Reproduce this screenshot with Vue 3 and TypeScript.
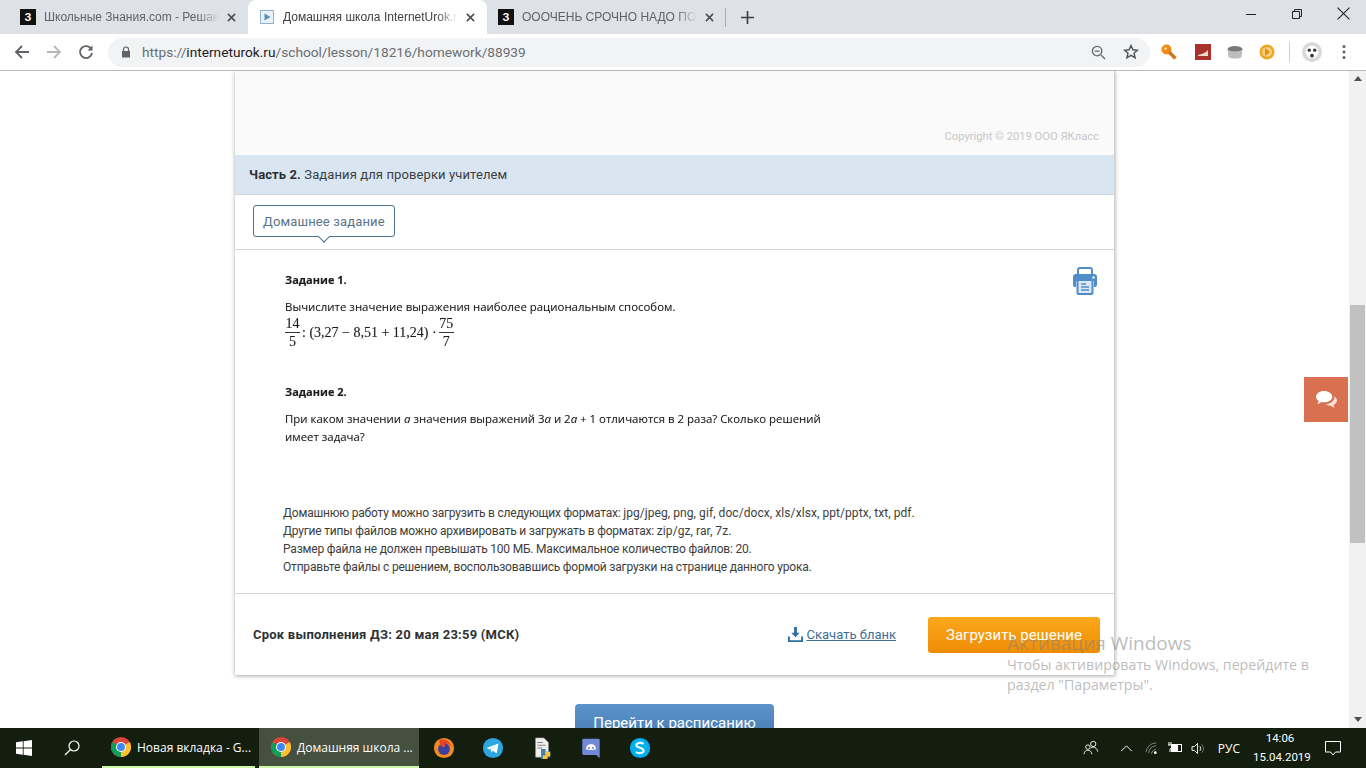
<script setup lang="ts">
interface Tab { title: string; active: boolean; icon: 'z' | 'i' }
interface Note { text: string; latin?: string }
const tabs: Tab[] = [
  { title: 'Школьные Знания.com - Решаем', active: false, icon: 'z' },
  { title: 'Домашняя школа InternetUrok.ru', active: true, icon: 'i' },
  { title: 'ОООЧЕНЬ СРОЧНО НАДО ПОМОЧЬ', active: false, icon: 'z' },
]
const notes: Note[] = [
  { text: 'Домашнюю работу можно загрузить в следующих форматах: ', latin: 'jpg/jpeg, png, gif, doc/docx, xls/xlsx, ppt/pptx, txt, pdf.' },
  { text: 'Другие типы файлов можно архивировать и загружать в форматах: ', latin: 'zip/gz, rar, 7z.' },
  { text: 'Размер файла не должен превышать 100 МБ. Максимальное количество файлов: 20.' },
  { text: 'Отправьте файлы с решением, воспользовавшись формой загрузки на странице данного урока.' },
]
</script>

<template>
  <div class="screen">
    <header class="tabstrip">
      <div v-for="t in tabs" :key="t.title" class="tab" :class="{ active: t.active }">
        <span v-if="t.icon === 'z'" class="fav-z">З</span>
        <svg v-else class="fav-i" viewBox="0 0 16 16"><rect x="1.5" y="1.5" width="13" height="13" fill="#e8f2f8" stroke="#8fb4cc"/><path d="M5.5 4.5v7l6-3.500z" fill="#5b8fb5"/></svg>
        <span class="tab-title">{{ t.title }}</span>
        <svg class="tab-x" viewBox="0 0 10 10"><path d="M1 1l8 8M9 1l-8 8" stroke="#4a4d50" stroke-width="1.700"/></svg>
      </div>
      <span class="tab-sep"></span>
      <svg class="newtab" viewBox="0 0 14 14"><path d="M7 0v14M0 7h14" stroke="#3c4043" stroke-width="1.800"/></svg>
      <div class="winctl">
        <svg viewBox="0 0 12 12"><path d="M1 6.500h10" stroke="#222" stroke-width="1"/></svg>
        <svg viewBox="0 0 12 12"><path d="M1.500 3.500h7v7h-7zM3.500 3.500v-2h7v7h-2" fill="none" stroke="#222" stroke-width="1"/></svg>
        <svg viewBox="0 0 12 12"><path d="M.5.5l11 11M11.500.5l-11 11" stroke="#222" stroke-width="1"/></svg>
      </div>
    </header>

    <nav class="toolbar">
      <svg class="nav" viewBox="0 0 16 16"><path d="M15 8H2M8 2L2 8l6 6" fill="none" stroke="#5f6368" stroke-width="1.800"/></svg>
      <svg class="nav" viewBox="0 0 16 16"><path d="M1 8h13M8 2l6 6-6 6" fill="none" stroke="#b5b7ba" stroke-width="1.800"/></svg>
      <svg class="nav" viewBox="0 0 16 16"><path d="M13.500 5.500A6 6 0 1 0 14 9" fill="none" stroke="#5f6368" stroke-width="1.800"/><path d="M14.500 1.500v5h-5z" fill="#5f6368"/></svg>
      <div class="omnibox">
        <svg class="lock" viewBox="0 0 10 12"><path d="M2.500 5V3.500a2.500 2.500 0 0 1 5 0V5" fill="none" stroke="#5f6368" stroke-width="1.200"/><rect x="1" y="5" width="8" height="6.500" fill="#5f6368"/></svg>
        <span class="url"><span class="dim">https://</span>interneturok.ru<span class="dim">/school/lesson/18216/homework/88939</span></span>
        <svg class="omni-zoom" viewBox="0 0 16 16"><circle cx="6.500" cy="6.500" r="5" fill="none" stroke="#5f6368" stroke-width="1.400"/><path d="M10.500 10.500l4.500 4.500M4 6.500h5" stroke="#5f6368" stroke-width="1.400"/></svg>
        <svg class="omni-star" viewBox="0 0 16 16"><path d="M8 1.500l1.900 4.300 4.600.4-3.500 3 1.100 4.600L8 11.400l-4.100 2.400L5 9.200l-3.500-3 4.600-.4z" fill="none" stroke="#4d5054" stroke-width="1.400"/></svg>
      </div>
      <div class="ext">
        <svg class="key" viewBox="0 0 16 16"><circle cx="5.500" cy="5.500" r="5" fill="#ef8a17"/><circle cx="4.500" cy="4.500" r="1.300" fill="#fbd9a8"/><path d="M8 8l6.500 6.500" stroke="#d8731a" stroke-width="3.400"/></svg>
        <svg viewBox="0 0 16 16"><rect width="16" height="16" fill="#a9322c"/><path d="M3 12h10V6l-2 2-2 1-2 1-4 1z" fill="#f3d9d4"/></svg>
        <svg viewBox="0 0 16 16"><ellipse cx="8" cy="5" rx="7.500" ry="3" fill="#777"/><path d="M.5 5.500l1 7.500c2 2 11 2 13 0l1-7.500c-2 2.500-13 2.500-15 0z" fill="#bdbdbd"/></svg>
        <svg viewBox="0 0 16 16"><circle cx="8" cy="8" r="7.500" fill="#f2a41f"/><circle cx="8" cy="8" r="5" fill="#f7d083"/><path d="M6 4l5 4-5 4z" fill="#e98d12"/></svg>
        <span class="ext-sep"></span>
        <svg class="avatar" viewBox="0 0 22 22"><circle cx="11" cy="11" r="11" fill="#d9dad9"/><circle cx="11" cy="11" r="7" fill="#fff"/><circle cx="8" cy="9" r="1.800" fill="#333"/><circle cx="14" cy="9" r="1.800" fill="#333"/><circle cx="11" cy="15" r="2" fill="#333"/></svg>
        <svg class="menu" viewBox="0 0 4 16"><circle cx="2" cy="2.500" r="1.500" fill="#5f6368"/><circle cx="2" cy="8" r="1.500" fill="#5f6368"/><circle cx="2" cy="13.500" r="1.500" fill="#5f6368"/></svg>
      </div>
    </nav>

    <div class="viewport">
      <main class="page">
        <section class="card">
          <div class="card-top"><span class="copyright">Copyright © 2019 ООО ЯКласс</span></div>
          <div class="part"><b>Часть 2.</b> Задания для проверки учителем</div>
          <div class="tabs-row"><span class="hw-tab">Домашнее задание</span></div>
          <div class="body">
            <svg class="printer" viewBox="0 0 24 28">
              <path d="M5 8V3a2 2 0 0 1 2-2h10a2 2 0 0 1 2 2v5" fill="none" stroke="#4f8cc9" stroke-width="2"/>
              <path d="M3 7h18a3 3 0 0 1 3 3v8a2 2 0 0 1-2 2h-1v-6H3v6H2a2 2 0 0 1-2-2v-8a3 3 0 0 1 3-3z" fill="#4f8cc9"/>
              <rect x="4.500" y="13" width="15" height="14" rx="1" fill="#dbe9f6" stroke="#4f8cc9" stroke-width="2"/>
              <path d="M8 17h5M8 20h8M8 23h8" stroke="#4f8cc9" stroke-width="1.500"/>
              <circle cx="20.500" cy="10.500" r="1.200" fill="#fff"/>
            </svg>
            <div class="task task-one">
              <p class="task-h">Задание 1.</p>
              <p class="task-p">Вычислите значение выражения наиболее рациональным способом.</p>
              <div class="math">
                <span class="frac"><span class="num">14</span><span class="den">5</span></span>
                <span class="expr">: (3,27 − 8,51 + 11,24) ·</span>
                <span class="frac"><span class="num">75</span><span class="den">7</span></span>
              </div>
            </div>
            <div class="task task-two">
              <p class="task-h">Задание 2.</p>
              <p class="task-p">При каком значении <i>a</i> значения выражений 3<i>a</i> и 2<i>a</i> + 1 отличаются в 2 раза? Сколько решений<br>имеет задача?</p>
            </div>
            <div class="notes">
              <p v-for="n in notes" :key="n.text">{{ n.text }}<span v-if="n.latin" class="latin">{{ n.latin }}</span></p>
            </div>
          </div>
          <footer class="card-foot">
            <b class="deadline">Срок выполнения ДЗ: 20 мая 23:59 (МСК)</b>
            <svg class="dl-icon" viewBox="0 0 16 16"><path d="M6.500 0h3v6h3L8 11 3.500 6h3z" fill="#2f6f9f"/><path d="M1 10v5h14v-5" fill="none" stroke="#2f6f9f" stroke-width="2"/></svg>
            <a class="dl-link">Скачать бланк</a>
            <span class="upload">Загрузить решение</span>
          </footer>
        </section>
        <div class="schedule-wrap"><span class="schedule">Перейти к расписанию</span></div>
      </main>
      <aside class="scrollbar">
        <span class="arrow-up"></span>
        <span class="thumb"></span>
        <span class="arrow-down"></span>
      </aside>
      <div class="chat">
        <svg viewBox="0 0 24 20"><path d="M9.500 1C4.800 1 1 3.700 1 7c0 1.800 1.100 3.400 2.900 4.500L2.500 15l4.200-2.300c.9.200 1.800.3 2.800.3 4.700 0 8.500-2.700 8.500-6S14.200 1 9.500 1z" fill="#fff"/><path d="M20 6.500c.2.500.3 1 .3 1.500 0 3.800-4 6.700-9 7 1.300 1 3.200 1.600 5.200 1.500l4 2.500-1-3.500c2.200-1 3.500-2.600 3.500-4.500 0-1.700-1.100-3.300-3-4.500z" fill="#fbe3d9"/></svg>
      </div>
      <div class="watermark">
        <div class="wm-h">Активация Windows</div>
        <div class="wm-p">Чтобы активировать Windows, перейдите в<br>раздел "Параметры".</div>
      </div>
    </div>

    <footer class="taskbar">
      <svg class="start" viewBox="0 0 16 16"><path d="M0 2.300l6.800-1v6.300H0zM7.600 1.200L16 0v7.600H7.600zM0 8.400h6.800v6.300l-6.800-1zM7.600 8.400H16V16l-8.400-1.200z" fill="#fff"/></svg>
      <svg class="search" viewBox="0 0 16 16"><circle cx="10" cy="6" r="5" fill="none" stroke="#fff" stroke-width="1.200"/><path d="M6.500 9.500L1 15" stroke="#fff" stroke-width="1.300"/></svg>
      <div class="tb-item">
        <svg class="chrome" viewBox="0 0 24 24"><circle cx="12" cy="12" r="11" fill="#db4437"/><path d="M12 12L2.500 6.500A11 11 0 0 0 12 23z" fill="#0f9d58"/><path d="M12 12l9.500-5.500A11 11 0 0 1 12 23z" fill="#fbc02d"/><circle cx="12" cy="12" r="5.500" fill="#fff"/><circle cx="12" cy="12" r="4.300" fill="#4285f4"/></svg>
        <span>Новая вкладка - G...</span>
      </div>
      <div class="tb-item tb-active">
        <svg class="chrome" viewBox="0 0 24 24"><circle cx="12" cy="12" r="11" fill="#db4437"/><path d="M12 12L2.500 6.500A11 11 0 0 0 12 23z" fill="#0f9d58"/><path d="M12 12l9.500-5.500A11 11 0 0 1 12 23z" fill="#fbc02d"/><circle cx="12" cy="12" r="5.500" fill="#fff"/><circle cx="12" cy="12" r="4.300" fill="#4285f4"/></svg>
        <span>Домашняя школа ...</span>
      </div>
      <div class="tb-apps">
        <svg viewBox="0 0 24 24"><circle cx="12" cy="12" r="11" fill="#f58a1f"/><circle cx="12" cy="13" r="6.500" fill="#3b3f9e"/><path d="M7 3c5-2 12 1 13 8-2-3-5-5-8-4 2 1 2 3 0 4-3 0-5-2-5-8z" fill="#e8432a"/></svg>
        <svg viewBox="0 0 24 24"><circle cx="12" cy="12" r="11" fill="#2ca5e0"/><path d="M5 12l13-5-2 11-4-3-2 2-.5-3.500L16 9l-7.500 4.500z" fill="#fff"/></svg>
        <svg viewBox="0 0 24 24"><path d="M5 1h9l5 5v16H5z" fill="#f0f0f0" stroke="#999" stroke-width=".7"/><path d="M7 6h6M7 9h9M7 12h5" stroke="#777"/><path d="M11 13h5v3h5v6h-5v2h-5z" fill="#3e7fb1"/><path d="M15 16h6v5h-3v3h-5v-4h3z" fill="#f4c63d"/></svg>
        <svg viewBox="0 0 24 24"><path d="M4 2h16a1.500 1.500 0 0 1 1.500 1.500V23l-4-3.500H4A1.500 1.500 0 0 1 2.500 18V3.500A1.500 1.500 0 0 1 4 2z" fill="#7289da"/><path d="M6.500 13c1-4 2-5 5.500-5s4.500 1 5.500 5c-2 1.500-9 1.500-11 0z" fill="#fff"/><circle cx="9.800" cy="12" r="1.200" fill="#7289da"/><circle cx="14.200" cy="12" r="1.200" fill="#7289da"/></svg>
        <svg viewBox="0 0 24 24"><circle cx="12" cy="12" r="11" fill="#00aff0"/><path d="M16 7.500C13 5.500 8 6.500 8 9c0 3.500 8 2 8 6 0 2.500-5 3.500-8.500 1.500" fill="none" stroke="#fff" stroke-width="2.200"/></svg>
      </div>
      <div class="tray">
        <svg class="t-people" viewBox="0 0 18 18"><circle cx="11.500" cy="4.500" r="3" fill="none" stroke="#fff"/><circle cx="5.500" cy="8" r="2.500" fill="none" stroke="#fff"/><path d="M1 16c.5-3 2-4.500 4.500-4.500S9.500 13 10 16M9 9c1-.8 1.500-1 2.500-1 2.500 0 4.500 2 5 5" fill="none" stroke="#fff"/></svg>
        <svg class="t-chev" viewBox="0 0 14 8"><path d="M1 7l6-6 6 6" fill="none" stroke="#fff" stroke-width="1.100"/></svg>
        <svg class="t-wifi" viewBox="0 0 16 14"><path d="M1 11A11 11 0 0 1 12 1M4 12a8 8 0 0 1 8-8M7 13a5 5 0 0 1 5-5" fill="none" stroke="#888"/><circle cx="11" cy="11.500" r="1.500" fill="#fff"/></svg>
        <svg class="t-batt" viewBox="0 0 16 12"><rect x="4.500" y="2.500" width="10" height="7" fill="none" stroke="#fff"/><rect x="5" y="3" width="6" height="6" fill="#fff"/><path d="M2 0v3M4 0v3M1 3h4v2l-2 2v3" fill="none" stroke="#fff"/></svg>
        <svg class="t-vol" viewBox="0 0 16 14"><path d="M1 5h2.500L7 1.500v11L3.500 9H1z" fill="none" stroke="#fff"/><path d="M9.500 4.500a4 4 0 0 1 0 5" fill="none" stroke="#fff"/><path d="M11.500 2.500a7 7 0 0 1 0 9" fill="none" stroke="#777"/></svg>
        <span class="t-lang">РУС</span>
        <span class="t-clock">14:06<br>15.04.2019</span>
        <svg class="t-notif" viewBox="0 0 16 15"><path d="M.5.500h15v10.500h-5l-2.500 3-2.500-3h-5z" fill="none" stroke="#fff"/></svg>
      </div>
    </footer>
  </div>
</template>

<style>
html, body { margin: 0; overflow: hidden; }
</style>

<style scoped>
.screen { width: 1366px; height: 768px; display: flex; flex-direction: column; overflow: hidden; background: #fff; font-family: "Roboto", "Liberation Sans", sans-serif; color: #333; }
p { margin: 0; }

.tabstrip { height: 34px; flex: none; background: #dee1e6; display: flex; align-items: stretch; padding-left: 9px; font-family: "Liberation Sans", sans-serif; }
.tab { width: 239px; box-sizing: border-box; display: flex; align-items: center; padding: 0 10px 0 11px; color: #5f6368; font-size: 12px; }
.tab.active { background: #fff; border-radius: 8px 8px 0 0; color: #3c4043; }
.fav-z { width: 16px; height: 16px; flex: none; background: #111; color: #fff; font: 700 11px/16px "Liberation Sans", sans-serif; text-align: center; }
.fav-i { width: 16px; height: 16px; flex: none; }
.tab-title { margin-left: 8px; flex: 1; white-space: nowrap; overflow: hidden; margin-right: 8px; -webkit-mask-image: linear-gradient(to right, #000 88%, transparent); mask-image: linear-gradient(to right, #000 88%, transparent); }
.tab-x { width: 9px; height: 9px; flex: none; margin-right: 2px; }
.tab-sep { width: 1px; height: 19px; background: #a8abb0; align-self: center; margin-left: -1px; }
.newtab { width: 13px; height: 13px; align-self: center; margin-left: 15px; }
.winctl { margin-left: auto; display: flex; align-items: center; gap: 34px; padding-right: 16px; margin-top: -7px; }
.winctl svg { width: 12px; height: 12px; }
.winctl svg:last-child { width: 13px; height: 13px; }

.toolbar { height: 37px; flex: none; box-sizing: border-box; background: #fff; border-bottom: 1px solid #b8b8b8; display: flex; align-items: center; padding-left: 14px; }
.nav { width: 16px; height: 16px; margin-right: 16px; }
.omnibox { width: 1042px; height: 29px; margin-left: -2px; background: #f1f3f4; border-radius: 15px; display: flex; align-items: center; box-sizing: border-box; padding-left: 13px; }
.lock { width: 10px; height: 12px; flex: none; }
.url { margin-left: 11px; font: 13.700px "Roboto", sans-serif; color: #1f2023; }
.dim { color: #6a6e73; }
.omni-zoom { width: 15px; height: 15px; margin-left: auto; }
.omni-star { width: 16px; height: 16px; margin: 0 11px 0 17px; }
.ext { display: flex; align-items: center; margin-left: 11px; }
.ext svg { width: 16px; height: 16px; margin-right: 16px; }
.ext .key { margin-right: 18px; }
.ext-sep { width: 1px; height: 20px; background: #d0d2d4; margin: 0 12px 0 -2px; }
.ext .avatar { width: 20px; height: 20px; margin-right: 20px; }
.ext .menu { width: 4px; height: 16px; margin: 0; }

.viewport { position: relative; flex: 1; min-height: 0; display: flex; overflow: hidden; }
.page { flex: 1; min-width: 0; overflow: hidden; }
.card { width: 880px; margin-left: 235px; box-sizing: border-box; border-right: 1px solid #d0d0d0; box-shadow: 0 1px 4px rgba(0,0,0,.35); background: #fff; }
.card-top { height: 84px; background: #fafafa; display: flex; justify-content: flex-end; align-items: flex-end; padding: 0 15px 12px 0; box-sizing: border-box; }
.copyright { font-size: 11.200px; color: #c7c7c7; }
.part { height: 40px; box-sizing: border-box; background: #d9e6f2; border-bottom: 1px solid #ccd5dc; padding-left: 14px; font-size: 13px; line-height: 40px; color: #3a3f44; letter-spacing: .11px; }
.part b { color: #2b2f33; }
.tabs-row { height: 55px; box-sizing: border-box; padding: 10px 0 0 18px; border-bottom: 1px solid #d4d4d4; }
.hw-tab { position: relative; display: inline-block; height: 32px; box-sizing: border-box; padding: 0 9px; border: 1px solid #4d7390; border-radius: 3px; font-size: 13px; line-height: 32px; color: #5d7387; letter-spacing: .15px; }
.hw-tab::after { content: ""; position: absolute; left: 50%; bottom: -5px; width: 7px; height: 7px; margin-left: -4px; background: #fff; border: solid #4d7390; border-width: 0 1px 1px 0; transform: rotate(45deg); }
.body { position: relative; height: 344px; box-sizing: border-box; border-bottom: 1px solid #d4d4d4; font-size: 12px; }
.printer { position: absolute; right: 17px; top: 17px; width: 24px; height: 28px; }
.task { padding-left: 50px; font-family: "Open Sans", "Liberation Sans", sans-serif; color: #1c1c1c; text-shadow: 0 0 1px rgba(0,0,0,.3); font-size: 11.430px; line-height: 18px; filter: blur(.3px); }
.task-one { padding-top: 21px; }
.task-two { padding-top: 34px; }
.task-h { font-weight: 700; font-size: 11px; margin-bottom: 9px; }
.math { display: flex; align-items: center; font: 14px "Liberation Serif", serif; color: #1c1c1c; }
.frac { display: inline-flex; flex-direction: column; align-items: center; min-width: 15px; line-height: 15px; }
.num { align-self: stretch; text-align: center; border-bottom: 1px solid #333; padding-bottom: 1px; }
.den { padding-top: 1px; }
.expr { margin: 0 2px; font-size: 14px; }
.notes { padding: 58px 0 0 48px; line-height: 18px; color: #3d3d3d; white-space: nowrap; letter-spacing: -.2px; }
.latin { letter-spacing: .07px; }
.card-foot { height: 81px; box-sizing: border-box; display: flex; align-items: center; padding: 0 14px 0 18px; }
.deadline { font-size: 13px; color: #2f3235; letter-spacing: .23px; }
.dl-icon { width: 15px; height: 15px; margin-left: auto; }
.dl-link { margin: 0 32px 0 4px; font-size: 13px; color: #3a6f96; text-decoration: underline; }
.upload { width: 172px; height: 36px; border-radius: 3px; background: linear-gradient(#fba71c, #ee8d05); color: #fff; font-size: 15px; line-height: 36px; text-align: center; }
.schedule-wrap { padding: 29px 0 0 575px; }
.schedule { display: block; width: 199px; height: 40px; border-radius: 4px 4px 0 0; background: linear-gradient(#5b93cb, #4378ad); color: #fff; font-size: 15px; line-height: 38px; text-align: center; }

.scrollbar { width: 17px; flex: none; background: #f1f1f1; position: relative; display: flex; flex-direction: column; align-items: center; }
.arrow-up { width: 0; height: 0; margin-top: 5px; border: 4px solid transparent; border-top: 0; border-bottom: 5px solid #505050; }
.thumb { width: 15px; height: 238px; margin-top: 224px; background: #c1c1c1; }
.arrow-down { width: 0; height: 0; margin-top: auto; margin-bottom: 6px; border: 4px solid transparent; border-bottom: 0; border-top: 5px solid #505050; }
.chat { position: absolute; left: 1304px; top: 306px; width: 44px; height: 45px; background: #d9704f; display: flex; align-items: center; justify-content: center; }
.chat svg { width: 23px; height: 19px; }
.watermark { position: absolute; left: 1007px; top: 560px; color: rgba(130,130,130,.55); font-family: "Open Sans", sans-serif; pointer-events: none; white-space: nowrap; }
.wm-h { font-size: 19px; line-height: 25px; }
.wm-p { font-size: 14.200px; line-height: 20px; margin-top: -1px; }

.taskbar { height: 40px; flex: none; background: #141e0e; display: flex; align-items: stretch; color: #fff; font: 12px "Open Sans", "Liberation Sans", sans-serif; }
.start { width: 16px; height: 16px; align-self: center; margin-left: 16px; }
.search { width: 16px; height: 16px; align-self: center; margin-left: 32px; }
.tb-item { width: 153px; box-sizing: border-box; margin-left: 6px; display: flex; align-items: center; padding-left: 8px; gap: 5px; border-bottom: 2px solid #cdf5a9; white-space: nowrap; }
.tb-item:first-of-type { margin-left: 22px; }
.tb-active { width: 160px; margin-left: 4px; background: #46503f; padding-left: 11px; }
.chrome { width: 22px; height: 22px; flex: none; }
.tb-apps { display: flex; align-items: center; gap: 27px; margin-left: 14px; }
.tb-apps svg { width: 22px; height: 22px; }
.tray { margin-left: auto; display: flex; align-items: center; position: relative; }
.tray svg { flex: none; }
.t-people { width: 16px; height: 16px; margin-right: 21px; }
.t-chev { width: 13px; height: 7px; margin-right: 12px; }
.t-wifi { width: 15px; height: 13px; margin-right: 7px; }
.t-batt { width: 16px; height: 12px; margin-right: 8px; }
.t-vol { width: 15px; height: 13px; margin-right: 12px; }
.t-lang { font-size: 12px; margin-right: 13px; }
.t-clock { width: 54px; font: 11.500px/19px "Roboto", sans-serif; text-align: center; margin-right: 18px; }
.t-notif { width: 16px; height: 15px; margin-right: 25px; }
</style>
